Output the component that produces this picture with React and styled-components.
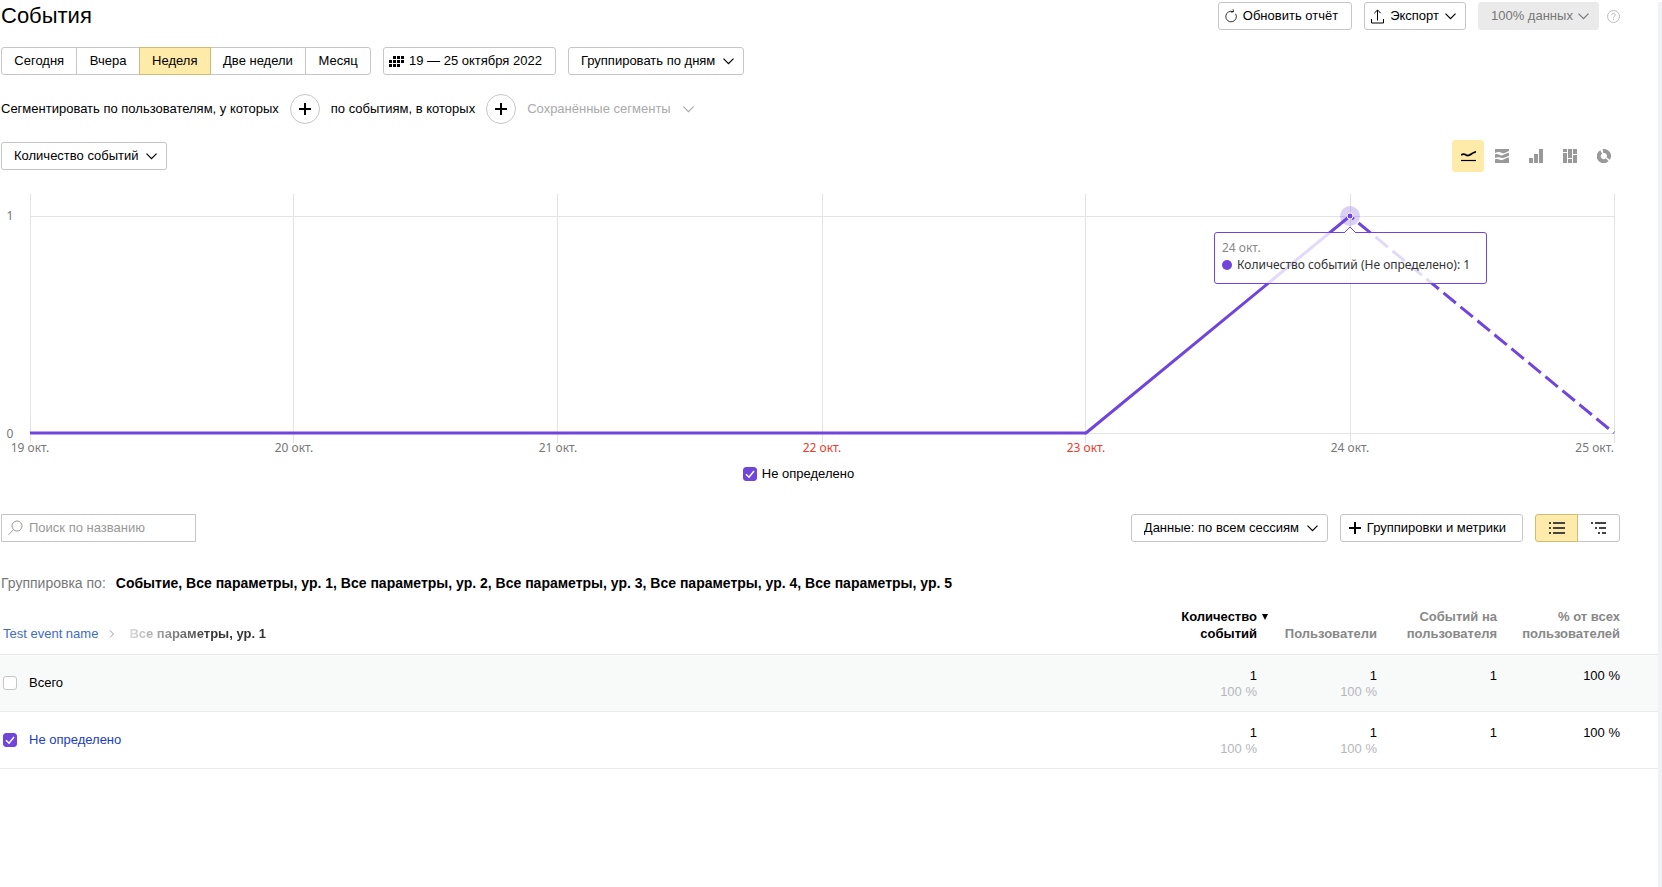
import React from 'react';
import styled, { createGlobalStyle, css } from 'styled-components';

const SANS = '"Liberation Sans", Arial, sans-serif';
const CHART = '"Noto Sans", Verdana, sans-serif';
const PURPLE = '#7045dc';

const GlobalStyle = createGlobalStyle`
  *, *::before, *::after { box-sizing: border-box; }
  body { margin: 0; background: #fff; color: #000; font: 13px/16px ${SANS}; }
  button, input, select { font: inherit; color: inherit; margin: 0; }
`;

const Page = styled.main`
  min-height: 100vh;
  border-right: 4px solid #f1f2f6;
`;

const Bar = styled.div`
  display: flex;
  align-items: center;
  gap: 12px;
  padding: 0 38px 0 1px;
  margin-top: ${p => p.$top || 0}px;
`;

const Spacer = styled.div`flex: 1;`;

const Title = styled.h1`
  margin: 0;
  font-size: 22px;
  line-height: 28px;
  font-weight: 400;
`;

const boxed = css`
  height: 28px;
  border: 1px solid #c6c6c6;
  border-radius: 3px;
  background: #fff;
  white-space: nowrap;
`;

const Button = styled.button`
  ${boxed}
  display: flex;
  align-items: center;
  gap: ${p => p.$gap || 6}px;
  padding: 0 ${p => p.$right || 13}px 0 ${p => p.$left || 12}px;
`;

const SelectBox = styled.span`
  display: inline-grid;
  align-items: center;
  color: ${p => (p.$muted ? '#777' : '#000')};
  > * { grid-area: 1 / 1; }
  > svg { justify-self: end; margin-right: 10px; pointer-events: none; }
`;

const NativeSelect = styled.select`
  ${boxed}
  appearance: none;
  padding: 0 27px 0 12px;
  opacity: 1;
  ${p => p.$muted && css`padding-right: 25px; background: #eaeaea; border-color: #eaeaea;`}
`;

const Segments = styled.div`
  display: flex;
  min-width: ${p => p.$min || 0}px;
`;

const Segment = styled.button`
  ${boxed}
  display: flex;
  flex: 1 1 auto;
  align-items: center;
  justify-content: center;
  padding: 0 12px;
  min-width: ${p => p.$min || 0}px;
  border-radius: 0;
  & + & { margin-left: -1px; }
  &:first-child { border-radius: 3px 0 0 3px; }
  &:last-child { border-radius: 0 3px 3px 0; }
  ${p => p.$active && css`background: #ffeba9; border-color: #ccbc76; z-index: 1;`}
`;

const SegmentBar = styled(Bar)`gap: 11px;`;

const RoundButton = styled.button`
  display: grid;
  place-items: center;
  width: 30px;
  height: 30px;
  padding: 0;
  border: 1px solid #c6c6c6;
  border-radius: 50%;
  background: #fff;
`;

const SavedButton = styled.button`
  display: flex;
  align-items: center;
  gap: 12px;
  padding: 0;
  border: 0;
  background: none;
  color: #aaa;
`;

const HelpButton = styled.button`
  display: flex;
  padding: 0;
  margin-left: -4px;
  border: 0;
  background: none;
`;

const ChartTypes = styled.div`
  display: flex;
  gap: 2px;
`;

const TypeButton = styled.button`
  display: grid;
  place-items: center;
  width: 32px;
  height: 32px;
  padding: 0;
  border: 0;
  border-radius: 3px;
  color: ${p => (p.$active ? '#000' : '#999')};
  background: ${p => (p.$active ? '#ffeba9' : 'none')};
`;

const ChartArea = styled.div`
  position: relative;
  margin: 22px 44px 0 30px;
`;

const ChartSvg = styled.svg`
  display: block;
  width: 100%;
  height: 264px;
  overflow: visible;
`;

const AxisText = styled.text`
  font: 12px ${CHART};
  fill: ${p => (p.$holiday ? '#f0392b' : '#777')};
  text-anchor: ${p => p.$anchor || 'middle'};
`;

const Tooltip = styled.div`
  position: absolute;
  top: 38px;
  left: calc(500% / 6);
  width: 273px;
  margin-left: -136px;
  height: 52px;
  padding: 6px 0 0 7px;
  border: 1px solid ${PURPLE};
  border-radius: 3px;
  background: rgba(255, 255, 255, 0.8);
  font: 12px/17px ${CHART};
  color: #333;
  white-space: nowrap;
  > svg { position: absolute; left: calc(50% - 7px); top: -7px; }
`;

const TooltipDate = styled.div`color: #888;`;

const TooltipItem = styled.div`
  display: flex;
  align-items: center;
  gap: 5px;
  &::before {
    content: '';
    width: 10px;
    height: 10px;
    border-radius: 50%;
    background: ${PURPLE};
  }
`;

const Legend = styled.div`
  display: flex;
  justify-content: center;
  padding: 0 62px 0 1px;
  margin-top: 8px;
`;

const CheckLabel = styled.label`
  display: inline-flex;
  align-items: center;
  gap: ${p => p.$gap}px;
`;

const CheckBox = styled.span`
  display: inline-grid;
  > * { grid-area: 1 / 1; }
  > svg { pointer-events: none; }
`;

const CheckInput = styled.input`
  appearance: none;
  width: 14px;
  height: 14px;
  border: 1px solid #c6c6c6;
  border-radius: 3px;
  background: #fff;
  &:checked { background: ${PURPLE}; border-color: ${PURPLE}; }
  &:not(:checked) + svg { visibility: hidden; }
`;

const Search = styled.label`
  ${boxed}
  display: flex;
  align-items: center;
  gap: 6px;
  width: 195px;
  padding: 0 6px;
  border-radius: 0;
`;

const SearchInput = styled.input`
  flex: 1;
  min-width: 0;
  padding: 0;
  border: 0;
  outline: 0;
  background: none;
  &::placeholder { color: #999; opacity: 1; }
`;

const Grouping = styled.p`
  display: flex;
  gap: 10px;
  margin: 31px 0 0 1px;
  font-size: 14px;
  line-height: 20px;
  color: #777;
  strong { color: #000; }
`;

const Table = styled.table`
  width: 100%;
  margin-top: 15px;
  border-collapse: collapse;
  table-layout: fixed;
`;

const Row = styled.tr`
  height: 57px;
  border-top: 1px solid #e9ebeb;
  border-bottom: 1px solid #e9ebeb;
  background: ${p => (p.$total ? '#f8f9f9' : '#fff')};
`;

const NameHead = styled.th`
  padding: 0 0 12px 3px;
  vertical-align: bottom;
  text-align: left;
  font-weight: 400;
  line-height: 17px;
`;

const Crumbs = styled.nav`
  display: flex;
  align-items: center;
  a { color: #4169c8; text-decoration: none; }
  svg { margin: 0 14px 0 11px; }
`;

const CrumbCurrent = styled.strong`
  background: linear-gradient(90deg, #ddd, #333 60%);
  background-clip: text;
  -webkit-background-clip: text;
  color: transparent;
`;

const NumHead = styled.th`
  width: ${p => p.$width || 120}px;
  padding: 0 ${p => p.$right || 0}px 12px 0;
  vertical-align: bottom;
  text-align: right;
  line-height: 17px;
  color: ${p => (p.$sorted ? '#000' : '#888')};
`;

const SortMark = styled.svg`
  width: 6px;
  height: 6px;
  margin: 0 -11px 1px 5px;
`;

const NameCell = styled.td`
  padding: 2px 0 0 3px;
  a { color: #1a3dc1; text-decoration: none; }
`;

const NumCell = styled.td`
  padding: 13px ${p => p.$right || 0}px 0 0;
  vertical-align: top;
  text-align: right;
  span { display: block; color: #b5b8bb; }
`;

const Chevron = () => (
  <svg width="11" height="7" viewBox="0 0 11 7" fill="none" stroke="currentColor">
    <path d="M.5.7 5.5 5.7 10.5.7" strokeWidth="1.2" />
  </svg>
);

const Plus = () => (
  <svg width="12" height="12" viewBox="0 0 12 12" stroke="#000" strokeWidth="2">
    <path d="M0 6H12M6 0V12" />
  </svg>
);

const Select = ({ label, muted }) => (
  <SelectBox $muted={muted}>
    <NativeSelect $muted={muted} disabled={muted} aria-label={label}>
      <option>{label}</option>
    </NativeSelect>
    <Chevron />
  </SelectBox>
);

const Check = ({ id, ...rest }) => (
  <CheckBox>
    <CheckInput type="checkbox" id={id} {...rest} />
    <svg width="14" height="14" viewBox="0 0 14 14" fill="none" stroke="#fff" strokeWidth="1.5">
      <path d="M3 7.2 6 10.2 11 4" />
    </svg>
  </CheckBox>
);

const RefreshIcon = () => (
  <svg width="12" height="14" viewBox="0 0 12 14" fill="none" stroke="#000">
    <path d="M8.2 2.7A5.3 5.3 0 1 0 10.6 4.8" strokeWidth=".8" />
    <path d="M5.8 3.2 8.6 2.7 8 .3" strokeWidth=".8" />
  </svg>
);

const ExportIcon = () => (
  <svg width="13" height="15" viewBox="0 0 13 15" fill="none" stroke="#000" strokeWidth="1">
    <path d="M.5 10V14H12.5V10M6.5 11.5V1M3.3 4.2 6.5 1 9.7 4.2" />
  </svg>
);

const CalendarIcon = () => (
  <svg width="15" height="11" viewBox="0 0 15 11">
    {[[4, 0], [8, 0], [12, 0], [0, 4], [4, 4], [8, 4], [12, 4], [0, 8], [4, 8], [8, 8]].map(([x, y]) => (
      <rect key={`${x}-${y}`} x={x} y={y} width="3" height="3" />
    ))}
  </svg>
);

const HelpIcon = () => (
  <svg width="13" height="13" viewBox="0 0 13 13" fill="none" stroke="#bbb">
    <circle cx="6.5" cy="6.5" r="6" />
    <path d="M4.8 5.2C4.8 2.7 8.3 2.8 8.3 5 8.3 6.2 6.5 6.2 6.5 7.7M6.5 8.7V9.9" />
  </svg>
);

const SearchIcon = () => (
  <svg width="15" height="16" viewBox="0 0 15 16" fill="none" stroke="#999">
    <circle cx="9" cy="6" r="5" />
    <path d="M5.4 9.8.6 14.8" />
  </svg>
);

const chartTypes = [
  { name: 'Линии', icon: <g fill="none" stroke="currentColor"><path d="M0 6C2 4.8 3 4.8 4.2 5.5S6.5 7 8 6.3 10 5 11.5 4.2 14 3.4 15 2.5" strokeWidth="1.8" /><path d="M0 11.5H15" strokeWidth="1.2" /></g> },
  { name: 'Области', icon: <path d="M0 0H14V2C11 3 9 5 7 4S3 2.5 0 4ZM0 5.5C3 4 5 7 7 6.5S11 4 14 3.8V6.8C11 8 9 9.5 7 9S3 7.5 0 9ZM0 10.5C3 9 5 11.5 7 11S11 9 14 8.5V14H0Z" /> },
  { name: 'Столбцы', icon: <path d="M0 9H4V14H0ZM5 5H9V14H5ZM10 0H14V14H10Z" /> },
  { name: 'Карта данных', icon: <path d="M0 0H4V3H0ZM0 4H4V14H0ZM5 0H9V9H5ZM5 10H9V14H5ZM10 0H14V5H10ZM10 6H14V14H10Z" /> },
  { name: 'Круговая', icon: <g fill="none" stroke="currentColor" strokeWidth="4"><path d="M6 2.1A5 5 0 0 1 11.2 9.7" /><path d="M10.2 10.8A5 5 0 1 1 4.2 2.9" /></g> },
];

const periods = ['Сегодня', 'Вчера', 'Неделя', 'Две недели', 'Месяц'];
const days = ['19 окт.', '20 окт.', '21 окт.', '22 окт.', '23 окт.', '24 окт.', '25 окт.'];
const at = i => `${(i * 100) / 6}%`;

const Chart = () => (
  <ChartArea>
    <ChartSvg role="img" aria-label="Количество событий">
      <g stroke="#e3e3e3" shapeRendering="crispEdges">
        {days.map((d, i) => <line key={d} x1={at(i)} x2={at(i)} y1="0" y2="249" />)}
        <line x1="0" x2="100%" y1="22" y2="22" />
        <line x1="0" x2="100%" y1="239" y2="239" />
      </g>
      <g stroke={PURPLE} strokeWidth="3">
        <line x1="0" x2={at(4)} y1="239" y2="239" />
        <line x1={at(4)} x2={at(5)} y1="239" y2="22" strokeLinecap="round" />
        <line x1={at(5)} x2={at(6)} y1="22" y2="239" strokeDasharray="16 6" strokeDashoffset="11" />
      </g>
      <circle cx={at(5)} cy="22" r="10" fill={PURPLE} fillOpacity=".25" />
      <circle cx={at(5)} cy="22" r="3" fill={PURPLE} stroke="#fff" />
      <AxisText x="-20" y="26">1</AxisText>
      <AxisText x="-20" y="244">0</AxisText>
      {days.map((d, i) => (
        <AxisText key={d} x={at(i)} y="258" $holiday={i === 3 || i === 4} $anchor={i === 6 ? 'end' : 'middle'}>{d}</AxisText>
      ))}
    </ChartSvg>
    <Tooltip>
      <svg width="12" height="7" viewBox="0 0 12 7">
        <path d="M0 7 6 1 12 7" fill="#fff" stroke={PURPLE} />
      </svg>
      <TooltipDate>24 окт.</TooltipDate>
      <TooltipItem>Количество событий (Не определено): 1</TooltipItem>
    </Tooltip>
  </ChartArea>
);

const Numbers = () => (
  <>
    <NumCell>1<span>100 %</span></NumCell>
    <NumCell>1<span>100 %</span></NumCell>
    <NumCell>1</NumCell>
    <NumCell $right={38}>100 %</NumCell>
  </>
);

export default function App() {
  return (
    <Page>
      <GlobalStyle />
      <Bar $top={2}>
        <Title>События</Title>
        <Spacer />
        <Button $left={6}><RefreshIcon />Обновить отчёт</Button>
        <Button $left={6} $right={9}><ExportIcon />Экспорт<Chevron /></Button>
        <Select label="100% данных" muted />
        <HelpButton aria-label="Справка"><HelpIcon /></HelpButton>
      </Bar>
      <Bar $top={17}>
        <Segments $min={370}>
          {periods.map(p => <Segment key={p} $active={p === 'Неделя'}>{p}</Segment>)}
        </Segments>
        <Button $left={5} $gap={5}><CalendarIcon />19 — 25 октября 2022</Button>
        <Select label="Группировать по дням" />
      </Bar>
      <SegmentBar $top={19}>
        <span>Сегментировать по пользователям, у которых</span>
        <RoundButton aria-label="Добавить условие по пользователям"><Plus /></RoundButton>
        <span>по событиям, в которых</span>
        <RoundButton aria-label="Добавить условие по событиям"><Plus /></RoundButton>
        <SavedButton>Сохранённые сегменты<Chevron /></SavedButton>
      </SegmentBar>
      <Bar $top={16}>
        <Select label="Количество событий" />
        <Spacer />
        <ChartTypes>
          {chartTypes.map((t, i) => (
            <TypeButton key={t.name} $active={i === 0} aria-label={t.name}>
              <svg width={i ? 14 : 15} height="14" fill="currentColor">{t.icon}</svg>
            </TypeButton>
          ))}
        </ChartTypes>
      </Bar>
      <Chart />
      <Legend>
        <CheckLabel $gap={5}><Check defaultChecked />Не определено</CheckLabel>
      </Legend>
      <Bar $top={32}>
        <Search>
          <SearchIcon />
          <SearchInput type="text" placeholder="Поиск по названию" aria-label="Поиск по названию" />
        </Search>
        <Spacer />
        <Select label="Данные: по всем сессиям" />
        <Button $left={8} $right={16}><Plus />Группировки и метрики</Button>
        <Segments>
          <Segment $active $min={43} aria-label="Список">
            <svg width="16" height="12" stroke="#444" strokeWidth="2">
              <path d="M0 1H2M4 1H16M0 6H2M4 6H16M0 11H2M4 11H16" />
            </svg>
          </Segment>
          <Segment $min={43} aria-label="Дерево">
            <svg width="16" height="12" stroke="#444" strokeWidth="2">
              <path d="M0 1H2M4 1H15M4 6H6M8 6H15M7 11H9M11 11H15" />
            </svg>
          </Segment>
        </Segments>
      </Bar>
      <Grouping>
        <span>Группировка по:</span>
        <strong>Событие, Все параметры, ур. 1, Все параметры, ур. 2, Все параметры, ур. 3, Все параметры, ур. 4, Все параметры, ур. 5</strong>
      </Grouping>
      <Table>
        <thead>
          <tr>
            <NameHead>
              <Crumbs>
                <a href="#event">Test event name</a>
                <svg width="6" height="8" viewBox="0 0 6 8" fill="none" stroke="#999"><path d="M1 .5 4.5 4 1 7.5" /></svg>
                <CrumbCurrent>Все параметры, ур. 1</CrumbCurrent>
              </Crumbs>
            </NameHead>
            <NumHead $sorted>Количество<SortMark viewBox="0 0 6 6"><path d="M0 0H6L3 6Z" /></SortMark><br />событий</NumHead>
            <NumHead>Пользователи</NumHead>
            <NumHead>Событий на пользователя</NumHead>
            <NumHead $width={161} $right={38}>% от всех<br />пользователей</NumHead>
          </tr>
        </thead>
        <tbody>
          <Row $total>
            <NameCell><CheckLabel $gap={12}><Check />Всего</CheckLabel></NameCell>
            <Numbers />
          </Row>
          <Row>
            <NameCell><CheckLabel $gap={12}><Check defaultChecked /><a href="#undefined">Не определено</a></CheckLabel></NameCell>
            <Numbers />
          </Row>
        </tbody>
      </Table>
    </Page>
  );
}
